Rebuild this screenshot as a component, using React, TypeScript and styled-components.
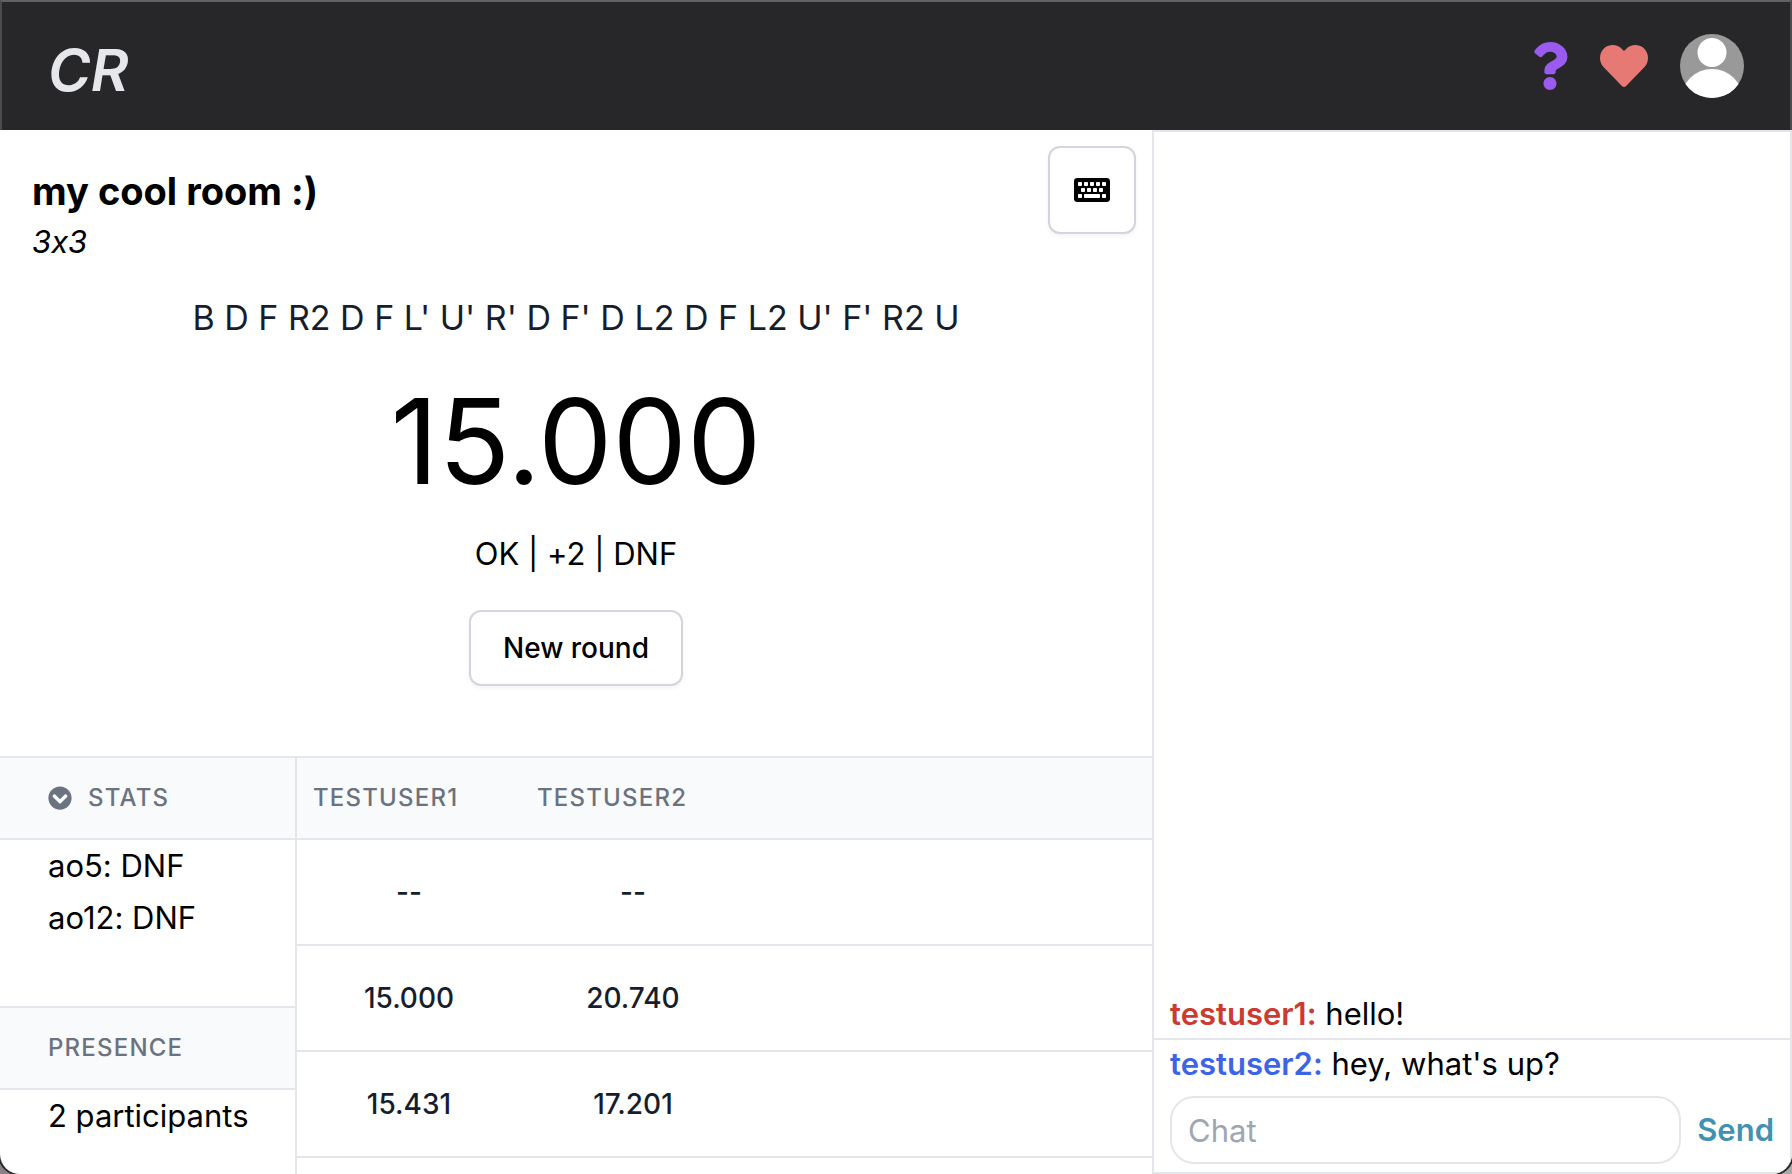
import React, { useState } from "react";
import styled, { createGlobalStyle } from "styled-components";
import { FaChevronCircleDown, FaHeart, FaKeyboard, FaQuestion } from "react-icons/fa";

const line = "#e5e6eb";

const GlobalStyle = createGlobalStyle`
  *, *::before, *::after { box-sizing: border-box; }
  body {
    margin: 0;
    background: linear-gradient(90deg, #8a8187, #a9a9a9);
    font-family: Inter, "Liberation Sans", sans-serif;
    font-size: 31px;
    line-height: 48px;
    font-feature-settings: "calt" 0;
    color: #000;
  }
  button, input { font: inherit; color: inherit; }
  h1, h2, p, ul { margin: 0; padding: 0; }
`;

const Window = styled.div`
  height: 100vh;
  display: flex;
  flex-direction: column;
  overflow: hidden;
  background: #fff;
  border-radius: 0 0 20px 20px;
  box-shadow: 0 0 0 2px #2b2b2b;
`;

const Header = styled.header`
  flex: none;
  height: 130px;
  display: flex;
  align-items: center;
  justify-content: space-between;
  padding: 0 46px;
  background: #272729;
  border: 2px solid #4b4b4d;
  border-top-color: #616163;
  border-bottom: 0;
`;

const Logo = styled.a`
  padding-top: 8px;
  font-size: 58px;
  line-height: 72px;
  font-style: italic;
  font-weight: 600;
  color: #e5e7eb;
  text-decoration: none;
`;

const HeaderActions = styled.nav`
  display: flex;
  align-items: center;
  gap: 32px;
`;

const IconLink = styled.a<{ $color: string; $width: number }>`
  display: flex;
  font-size: 48px;
  color: ${(p) => p.$color};

  svg {
    width: ${(p) => p.$width}px;
  }
`;

const AvatarButton = styled.button`
  display: flex;
  padding: 0;
  border: 0;
  background: none;
`;

const Body = styled.div`
  flex: 1;
  min-height: 0;
  display: flex;
`;

const Room = styled.main`
  flex: 1;
  min-width: 0;
  display: flex;
  flex-direction: column;
`;

const RoomTop = styled.div`
  display: flex;
  justify-content: space-between;
  align-items: flex-start;
  padding: 16px 16px 0 32px;
`;

const RoomTitle = styled.div`
  display: flex;
  flex-direction: column;
  gap: 2px;
  padding-top: 20px;
`;

const RoomName = styled.h1`
  font-size: 38px;
  line-height: 50px;
  font-weight: 700;
`;

const Puzzle = styled.p`
  font-style: italic;
`;

const OutlineButton = styled.button`
  display: flex;
  align-items: center;
  justify-content: center;
  min-height: 76px;
  padding: 0 32px;
  border: 2px solid #d2d5dc;
  border-radius: 12px;
  background: #fff;
  box-shadow: 0 2px 4px rgba(0, 0, 0, 0.05);
  font-size: 28px;
  font-weight: 500;
`;

const SquareButton = styled(OutlineButton)`
  width: 88px;
  height: 88px;
  padding: 0;

  svg {
    width: 36px;
    height: 32px;
  }
`;

const Timer = styled.section`
  flex: none;
  display: flex;
  flex-direction: column;
  align-items: center;
  padding: 24px 32px 70px;
`;

const Scramble = styled.p`
  font-size: 34px;
  line-height: 56px;
  color: #161e2e;
`;

const Time = styled.p`
  padding: 36px 0 30px;
  font-size: 118px;
  line-height: 118px;
`;

const Penalties = styled.div`
  padding-bottom: 32px;
`;

const TextButton = styled.button`
  padding: 0;
  border: 0;
  background: none;
`;

const Results = styled.div`
  flex: 1;
  min-height: 0;
  display: flex;
  overflow: hidden;
  border-top: 2px solid ${line};
`;

const Sidebar = styled.aside`
  flex: none;
  width: 297px;
  border-right: 2px solid ${line};
`;

const PanelHeading = styled.h2`
  display: flex;
  align-items: center;
  gap: 16px;
  height: 82px;
  padding: 0 48px;
  background: #f9fafb;
  border-bottom: 2px solid ${line};
  font-size: 24px;
  font-weight: 500;
  letter-spacing: 0.05em;
  text-transform: uppercase;
  color: #6b7280;
`;

const PanelBody = styled.div<{ $divided?: boolean }>`
  padding: 0 48px ${(p) => (p.$divided ? 62 : 0)}px;
  border-bottom: ${(p) => (p.$divided ? `2px solid ${line}` : "0")};
  line-height: 52px;
  white-space: nowrap;
`;

const TimesTable = styled.table`
  flex: 1;
  min-width: 0;
  height: max-content;
  table-layout: fixed;
  border-collapse: separate;
  border-spacing: 0;
`;

const UserHead = styled.th<{ $rest?: boolean }>`
  width: ${(p) => (p.$rest ? "auto" : "224px")};
  height: 82px;
  padding: 0 16px;
  background: #f9fafb;
  border-bottom: 2px solid ${line};
  font-size: 24px;
  font-weight: 500;
  letter-spacing: 0.05em;
  text-align: left;
  text-transform: uppercase;
  color: #6b7280;
`;

const TimeCell = styled.td`
  height: 106px;
  padding: 0 16px;
  border-bottom: 2px solid ${line};
  font-size: 28px;
  font-weight: 500;
  text-align: center;
  color: #161e2e;
`;

const Chat = styled.section`
  flex: none;
  width: 640px;
  display: flex;
  flex-direction: column;
  justify-content: flex-end;
  border: 2px solid ${line};
`;

const Messages = styled.ul`
  list-style: none;
`;

const Message = styled.li`
  padding: 0 16px;
  & + & {
    border-top: 2px solid ${line};
  }
`;

const Author = styled.span<{ $color: string }>`
  font-weight: 600;
  color: ${(p) => p.$color};
`;

const ChatForm = styled.form`
  display: flex;
  align-items: center;
  gap: 16px;
  padding: 8px 16px;
`;

const ChatInput = styled.input`
  flex: 1;
  min-width: 0;
  height: 68px;
  padding: 0 16px;
  border: 2px solid ${line};
  border-radius: 24px;
  background: #fff;
  outline: none;
  &::placeholder {
    color: #9fa6b2;
    opacity: 1;
  }
`;

const SendButton = styled(TextButton)`
  font-weight: 600;
  color: #4191b0;
`;

function Avatar() {
  return (
    <svg width="64" height="64" viewBox="0 0 64 64" aria-hidden="true">
      <defs>
        <clipPath id="avatar-disc">
          <circle cx="32" cy="32" r="32" />
        </clipPath>
      </defs>
      <g clipPath="url(#avatar-disc)">
        <rect width="64" height="64" fill="#999" />
        <circle cx="32" cy="18.5" r="14.5" fill="#fff" />
        <circle cx="32" cy="66" r="31" fill="#fff" />
      </g>
    </svg>
  );
}

const users = ["testuser1", "testuser2"];
const rounds = [
  ["--", "--"],
  ["15.000", "20.740"],
  ["15.431", "17.201"],
];
const messages = [
  { author: "testuser1", color: "#cb3b32", text: "hello!" },
  { author: "testuser2", color: "#3b64e6", text: "hey, what's up?" },
];

export default function App() {
  const [draft, setDraft] = useState("");

  return (
    <>
      <GlobalStyle />
      <Window>
        <Header>
          <Logo href="#home">CR</Logo>
          <HeaderActions>
            <IconLink href="#help" aria-label="Help" $color="#9b5af0" $width={36}>
              <FaQuestion />
            </IconLink>
            <IconLink href="#donate" aria-label="Donate" $color="#e77975" $width={48}>
              <FaHeart />
            </IconLink>
            <AvatarButton type="button" aria-label="Profile">
              <Avatar />
            </AvatarButton>
          </HeaderActions>
        </Header>
        <Body>
          <Room>
            <RoomTop>
              <RoomTitle>
                <RoomName>my cool room :)</RoomName>
                <Puzzle>3x3</Puzzle>
              </RoomTitle>
              <SquareButton type="button" aria-label="Manual entry">
                <FaKeyboard />
              </SquareButton>
            </RoomTop>
            <Timer>
              <Scramble>B D F R2 D F L' U' R' D F' D L2 D F L2 U' F' R2 U</Scramble>
              <Time>15.000</Time>
              <Penalties>
                <TextButton type="button">OK</TextButton> | <TextButton type="button">+2</TextButton> |{" "}
                <TextButton type="button">DNF</TextButton>
              </Penalties>
              <OutlineButton type="button">New round</OutlineButton>
            </Timer>
            <Results>
              <Sidebar>
                <PanelHeading>
                  <FaChevronCircleDown />
                  Stats
                </PanelHeading>
                <PanelBody $divided>
                  <p>ao5: DNF</p>
                  <p>ao12: DNF</p>
                </PanelBody>
                <PanelHeading>Presence</PanelHeading>
                <PanelBody>
                  <p>2 participants</p>
                </PanelBody>
              </Sidebar>
              <TimesTable>
                <thead>
                  <tr>
                    {users.map((user) => (
                      <UserHead key={user} scope="col">
                        {user}
                      </UserHead>
                    ))}
                    <UserHead as="td" $rest />
                  </tr>
                </thead>
                <tbody>
                  {rounds.map((times, i) => (
                    <tr key={i}>
                      {times.map((time, j) => (
                        <TimeCell key={j}>{time}</TimeCell>
                      ))}
                      <TimeCell />
                    </tr>
                  ))}
                </tbody>
              </TimesTable>
            </Results>
          </Room>
          <Chat aria-label="Chat">
            <Messages>
              {messages.map((m) => (
                <Message key={m.author}>
                  <Author $color={m.color}>{m.author}:</Author> {m.text}
                </Message>
              ))}
            </Messages>
            <ChatForm onSubmit={(e) => e.preventDefault()}>
              <ChatInput
                aria-label="Chat message"
                placeholder="Chat"
                value={draft}
                onChange={(e) => setDraft(e.target.value)}
              />
              <SendButton type="submit">Send</SendButton>
            </ChatForm>
          </Chat>
        </Body>
      </Window>
    </>
  );
}
